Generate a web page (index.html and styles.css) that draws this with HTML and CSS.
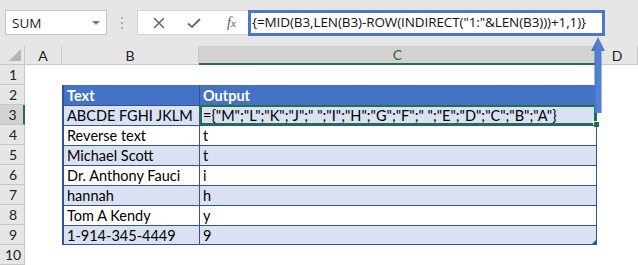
FILE: index.html
```html
<!DOCTYPE html>
<html>
<head>
<meta charset="utf-8">
<link rel="stylesheet" href="styles.css">
</head>
<body>
<div class="app">
  <div class="toolbar">
    <div class="namebox"><span class="name">SUM</span><span class="caret"></span></div>
    <div class="sep"><i></i><i></i><i></i></div>
    <div class="fxbtns">
      <svg class="ico" width="14" height="14" viewBox="0 0 14 14"><path d="M2 2 L12 12 M12 2 L2 12" stroke="#6b6b6b" stroke-width="1.6" fill="none"/></svg>
      <svg class="ico" width="16" height="14" viewBox="0 0 16 14"><path d="M2 7.5 L6 11 L14 3" stroke="#6b6b6b" stroke-width="2" fill="none"/></svg>
      <span class="fx">f<small>x</small></span>
    </div>
    <div class="formula">{=MID(B3,LEN(B3)-ROW(INDIRECT("1:"&amp;LEN(B3)))+1,1)}</div>
  </div>
  <div class="sheet">
    <div class="corner"><span class="tri"></span></div>
    <div class="ch">A</div>
    <div class="ch">B</div>
    <div class="ch sel">C</div>
    <div class="ch">D</div>

    <div class="rh">1</div><div class="c"></div><div class="c"></div><div class="c"></div><div class="c"></div>

    <div class="rh">2</div><div class="c"></div><div class="c th tl">Text</div><div class="c th tr">Output</div><div class="c"></div>

    <div class="rh sel">3</div><div class="c"></div><div class="c tb band tl">ABCDE FGHI JKLM</div><div class="c tb band tr active">={"M";"L";"K";"J";" ";"I";"H";"G";"F";" ";"E";"D";"C";"B";"A"}<span class="handle"></span></div><div class="c"></div>

    <div class="rh">4</div><div class="c"></div><div class="c tb tl">Reverse text</div><div class="c tb tr">t</div><div class="c"></div>

    <div class="rh">5</div><div class="c"></div><div class="c tb band tl">Michael Scott</div><div class="c tb band tr">t</div><div class="c"></div>

    <div class="rh">6</div><div class="c"></div><div class="c tb tl">Dr. Anthony Fauci</div><div class="c tb tr">i</div><div class="c"></div>

    <div class="rh">7</div><div class="c"></div><div class="c tb band tl">hannah</div><div class="c tb band tr">h</div><div class="c"></div>

    <div class="rh">8</div><div class="c"></div><div class="c tb tl">Tom A Kendy</div><div class="c tb tr">y</div><div class="c"></div>

    <div class="rh">9</div><div class="c"></div><div class="c tb band tl last">1-914-345-4449</div><div class="c tb band tr last">9<span class="corner-mark"></span></div><div class="c"></div>

    <div class="rh">10</div><div class="c"></div><div class="c"></div><div class="c"></div><div class="c"></div>
  </div>
  <svg class="arrow" width="20" height="82" viewBox="0 0 20 82">
    <defs>
      <linearGradient id="g" x1="0" x2="1" y1="0" y2="0">
        <stop offset="0" stop-color="#3f6bbd"/>
        <stop offset="0.5" stop-color="#5382d6"/>
        <stop offset="1" stop-color="#4a77c8"/>
      </linearGradient>
    </defs>
    <path d="M10 2 L17 16 L13.5 16 L13.5 78 L6.5 78 L6.5 16 L3 16 Z" fill="url(#g)"/>
  </svg>
</div>
</body>
</html>
```

FILE: styles.css
```css
html, body {
  margin: 0;
  padding: 0;
  background: #ffffff;
}
.app {
  position: relative;
  width: 638px;
  height: 265px;
  overflow: hidden;
}
.toolbar {
  height: 46px;
  background: #e6e6e6;
  display: flex;
  align-items: flex-start;
  padding: 10px 0 0 5px;
  box-sizing: border-box;
}
.namebox {
  width: 102px;
  height: 25px;
  box-sizing: border-box;
  background: #fff;
  border: 1px solid #c6c6c6;
  display: flex;
  align-items: center;
  justify-content: space-between;
  padding: 0 6px 0 6px;
  font-family: "Open Sans", "Noto Sans", sans-serif;
  font-size: 13.5px;
  color: #222;
}
.caret {
  width: 0;
  height: 0;
  border-left: 4px solid transparent;
  border-right: 4px solid transparent;
  border-top: 4px solid #7a7a7a;
  margin-top: 1px;
}
.sep {
  width: 30px;
  height: 25px;
  display: flex;
  flex-direction: column;
  align-items: center;
  justify-content: center;
  gap: 3px;
}
.sep i {
  display: block;
  width: 2px;
  height: 2px;
  background: #b0b0b0;
}
.fxbtns {
  width: 111px;
  height: 25px;
  box-sizing: border-box;
  background: #fff;
  border: 1px solid #d4d4d4;
  border-right: none;
  display: flex;
  align-items: center;
  padding-left: 14px;
  gap: 20px;
}
.fx {
  font-family: "Liberation Serif", serif;
  font-style: italic;
  font-size: 14px;
  color: #555;
  margin-left: 5px;
}
.fx small {
  font-size: 11px;
}
.formula {
  width: 357px;
  height: 26px;
  box-sizing: border-box;
  border: 3px solid #4a78c8;
  background: #fff;
  font-family: "Open Sans", "Noto Sans", sans-serif;
  font-size: 13.5px;
  color: #111;
  padding-left: 1px;
  line-height: 19px;
  white-space: nowrap;
  overflow: hidden;
  letter-spacing: -0.1px;
}
.sheet {
  display: grid;
  grid-template-columns: 25px 37px 137px 398px 41px;
  grid-template-rows: 19px repeat(10, 20px);
  font-family: "Lato", "Liberation Sans", sans-serif;
  font-size: 14.5px;
  color: #000;
}
.corner, .ch, .rh {
  background: #e6e6e6;
  box-sizing: border-box;
  color: #222;
}
.corner {
  position: relative;
  border-right: 1px solid #c8c8c8;
  border-bottom: 1px solid #c8c8c8;
}
.tri {
  position: absolute;
  right: 3px;
  bottom: 3px;
  width: 0;
  height: 0;
  border-left: 12px solid transparent;
  border-bottom: 12px solid #b4b4b4;
}
.ch {
  display: flex;
  align-items: center;
  justify-content: center;
  border-right: 1px solid #c8c8c8;
  border-bottom: 1px solid #c8c8c8;
  font-size: 14px;
}
.ch.sel {
  background: #d2d2d2;
  color: #1e6b44;
  border-bottom: 2px solid #217346;
}
.rh {
  display: flex;
  align-items: center;
  justify-content: center;
  border-right: 1px solid #c8c8c8;
  border-bottom: 1px solid #c8c8c8;
  font-size: 14px;
  padding-left: 2px;
}
.rh.sel {
  background: #d2d2d2;
  border-right: 2px solid #217346;
}
.c {
  box-sizing: border-box;
  white-space: nowrap;
  display: flex;
  align-items: center;
  padding-left: 3px;
  position: relative;
}
.th {
  background: #4472c4;
  color: #fff;
  font-weight: bold;
}
.tb {
  border-top: 1px solid #2f5597;
}
.band {
  background: #d9e1f2;
}
.tl {
  border-left: 2px solid #2f5597;
}
.tr {
  border-left: 1px solid #2f5597;
  border-right: 1px solid #2f5597;
}
.last {
  border-bottom: 1px solid #2f5597;
}
.active {
  box-shadow: inset 0 0 0 2px #217346;
  border-top: none;
}
.handle {
  position: absolute;
  right: -4px;
  bottom: -3px;
  width: 5px;
  height: 5px;
  background: #217346;
  border: 1px solid #fff;
}
.corner-mark {
  position: absolute;
  right: 0;
  bottom: 0;
  width: 0;
  height: 0;
  border-left: 4px solid transparent;
  border-bottom: 4px solid #2f5597;
}
.arrow {
  position: absolute;
  left: 588px;
  top: 35px;
}
```
